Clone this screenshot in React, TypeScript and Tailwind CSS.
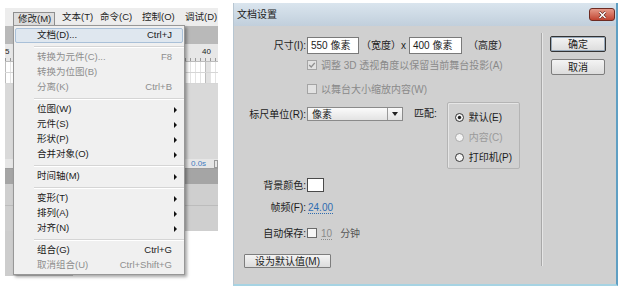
import React from "react";

type Item =
  | { label: string; sc?: string; sub?: boolean; dis?: boolean; hl?: boolean }
  | "sep";

const MENU: Item[] = [
  { label: "文档(D)...", sc: "Ctrl+J", hl: true },
  "sep",
  { label: "转换为元件(C)...", sc: "F8", dis: true },
  { label: "转换为位图(B)", dis: true },
  { label: "分离(K)", sc: "Ctrl+B", dis: true },
  "sep",
  { label: "位图(W)", sub: true },
  { label: "元件(S)", sub: true },
  { label: "形状(P)", sub: true },
  { label: "合并对象(O)", sub: true },
  "sep",
  { label: "时间轴(M)", sub: true },
  "sep",
  { label: "变形(T)", sub: true },
  { label: "排列(A)", sub: true },
  { label: "对齐(N)", sub: true },
  "sep",
  { label: "组合(G)", sc: "Ctrl+G" },
  { label: "取消组合(U)", sc: "Ctrl+Shift+G", dis: true },
];

function Check({ on, dis }: { on?: boolean; dis?: boolean }) {
  return (
    <svg width="10" height="10" viewBox="0 0 10 10" className="shrink-0">
      <rect x="0.5" y="0.5" width="9" height="9" fill={dis ? "#e2e2e2" : "#f6f6f6"} stroke={dis ? "#a4a4a4" : "#6a6a6a"} />
      {on && <path d="M2.2 5 L4.2 7 L7.8 2.8" fill="none" stroke={dis ? "#8f8f8f" : "#222"} strokeWidth="1.3" />}
    </svg>
  );
}

function Radio({ on, dis }: { on?: boolean; dis?: boolean }) {
  return (
    <svg width="9" height="9" viewBox="0 0 9 9" className="shrink-0">
      <circle cx="4.5" cy="4.5" r="4" fill="#f3f3f3" stroke={dis ? "#a9a9a9" : "#333"} />
      {on && <circle cx="4.5" cy="4.5" r="1.7" fill="#222" />}
    </svg>
  );
}

function Menu() {
  return (
    <div className="absolute left-[8px] top-[17px] w-[172px] pt-[2px] pb-[1px] bg-[#f0f0f0] border border-[#979797] shadow-[2px_2px_3px_rgba(0,0,0,0.35)]">
      {MENU.map((it, i) =>
        it === "sep" ? (
          <div key={i} className="h-[7px] flex items-center ml-[20px]">
            <div className="w-full h-[2px] border-t border-[#d5d5d5] border-b border-b-white" />
          </div>
        ) : (
          <div
            key={i}
            className={`relative flex items-center h-[15px] ${
              it.hl
                ? "mx-[1px] pl-[21px] pr-[10px] rounded-[2px] border border-[#a9c0d8] bg-[#dfe7ef]"
                : "pl-[23px] pr-[12px]"
            } ${it.dis ? "text-[#8e8e8e]" : "text-[#1b1b1b]"}`}
          >
            <span className="flex-1">{it.label}</span>
            {it.sc && <span>{it.sc}</span>}
            {it.sub && (
              <span className="absolute right-[7px] top-[5px] w-0 h-0 border-y-[3px] border-y-transparent border-l-[3px] border-l-[#111]" />
            )}
          </div>
        )
      )}
    </div>
  );
}

function FlashPanel() {
  return (
    <div className="relative ml-[5px] mt-[8px] w-[213px] h-[269px] shrink-0 text-[9.5px]">
      <div className="flex items-center h-[18px] bg-[#ededed] text-[#1e1e1e]">
        <div className="self-end ml-[8px] w-[42px] h-[14px] flex items-center pl-[4px] bg-[#dedede] border border-b-0 border-[#8e8e8e]">
          修改(M)
        </div>
        <span className="ml-[7px] w-[38px]">文本(T)</span>
        <span className="w-[42px]">命令(C)</span>
        <span className="w-[43px]">控制(O)</span>
        <span>调试(D)</span>
      </div>
      <div className="h-[18px] bg-[#b9b9b9]" />
      <div className="relative h-[18px] bg-[#e7e7e7] border-b border-[#bcbcbc] text-[8px] text-[#222]">
        <span className="absolute left-0 top-[2px]">5</span>
        <span className="absolute left-[197px] top-[2px]">40</span>
        <div className="absolute bottom-0 left-0 right-0 flex h-[3px]">
          {Array.from({ length: 43 }).map((_, i) => (
            <div key={i} className="w-[5px] shrink-0 border-l border-[#9a9a9a]" />
          ))}
        </div>
      </div>
      {[0, 1].map((r) => (
        <div key={r} className="flex h-[11px] bg-white border-b border-[#d6d6d6] overflow-hidden">
          {Array.from({ length: 43 }).map((_, i) => (
            <div
              key={i}
              className={`w-[5px] shrink-0 border-l ${i % 5 === 0 ? "border-[#bdbdbd]" : "border-[#e4e4e4]"} ${i === 40 ? "bg-[#e2e2e2]" : ""}`}
            />
          ))}
        </div>
      ))}
      <div className="h-[75px] bg-[#d9d9d9]" />
      <div className="flex items-center h-[10px] bg-[#e6e6e6] border-b border-[#9d9d9d] text-[8px] text-[#3f7bbf]">
        <span className="ml-[186px]">0.0s</span>
        <span className="ml-auto h-[8px] w-[4px] border border-[#9a9a9a]" />
      </div>
      <div className="h-[15px] bg-[#a5a5a5]" />
      <div className="h-[47px] bg-[#cfcfcf] flex flex-col">
        <div className="h-[22px] border-b border-[#bcbcbc]" />
      </div>
      <div className="h-[45px] w-[68px] bg-[#cdcdcd]" />
      <Menu />
    </div>
  );
}

function Btn({ children, def, w }: { children: React.ReactNode; def?: boolean; w: string }) {
  return (
    <div
      className={`${w} h-[16px] flex items-center justify-center rounded-[2px] bg-linear-to-b from-[#f4f4f4] to-[#dcdcdc] text-[10px] text-[#1a1a1a] ${
        def ? "border border-[#333] shadow-[inset_0_0_0_1px_#9ab]" : "border border-[#7d7d7d]"
      }`}
    >
      {children}
    </div>
  );
}

function DocDialog() {
  return (
    <div className="ml-[15px] mt-[3px] w-[385px] h-[283px] shrink-0 flex flex-col border-l border-l-[#b7c6d2] border-r-2 border-r-[#5f9fc3] border-b-2 border-b-[#a6d3e3] text-[10px] text-[#1c1c1c]">
      <div className="relative h-[23px] shrink-0 flex items-center pl-[3px] bg-linear-to-b from-[#dae5ee] to-[#c1cfdc]">
        文档设置
        <div className="absolute right-[1px] top-[5px] w-[26px] h-[13px] rounded-[3px] border border-[#6d2b22] bg-linear-to-b from-[#e59a8a] to-[#c0412f] flex items-center justify-center">
          <svg width="9" height="8" viewBox="0 0 9 8">
            <path d="M1.5 1 L7.5 7 M7.5 1 L1.5 7" stroke="#5a1d16" strokeWidth="2.6" />
            <path d="M1.5 1 L7.5 7 M7.5 1 L1.5 7" stroke="#fff" strokeWidth="1.5" />
          </svg>
        </div>
      </div>
      <div className="flex flex-1 bg-[#d0d0d0]">
        <div className="w-[307px] flex flex-col">
          <div className="flex items-center h-[17px] mt-[11px]">
            <span className="w-[72px] text-right">尺寸(I):</span>
            <div className="ml-[1px] w-[52px] h-[17px] flex items-center pl-[3px] bg-white border border-[#7a7a7a]">550 像素</div>
            <span className="ml-[2px]">（宽度）x</span>
            <div className="ml-[3px] w-[53px] h-[17px] flex items-center pl-[3px] bg-white border border-[#7a7a7a]">400 像素</div>
            <span className="ml-[6px]">（高度）</span>
          </div>
          <div className="flex items-center h-[14px] mt-[4px] ml-[73px] text-[#8a8a8a]">
            <Check on dis />
            <span className="ml-[4px]">调整 3D 透视角度以保留当前舞台投影(A)</span>
          </div>
          <div className="flex items-center h-[14px] mt-[10px] ml-[73px] text-[#8a8a8a]">
            <Check dis />
            <span className="ml-[4px]">以舞台大小缩放内容(W)</span>
          </div>
          <div className="flex items-start mt-[6px]">
            <div className="flex items-center h-[14px] mt-[5px]">
              <span className="w-[72px] text-right">标尺单位(R):</span>
              <div className="ml-[1px] w-[96px] h-[14px] flex items-center bg-linear-to-b from-[#fbfbfb] to-[#e3e3e3] border border-[#8a8a8a]">
                <span className="flex-1 pl-[4px]">像素</span>
                <div className="w-[15px] h-full border-l border-[#9a9a9a] flex items-center justify-center">
                  <svg width="6" height="4" viewBox="0 0 6 4">
                    <path d="M0 0 L6 0 L3 4 Z" fill="#222" />
                  </svg>
                </div>
              </div>
            </div>
            <span className="ml-[11px] mt-[4px]">匹配:</span>
            <div className="ml-[10px] w-[73px] h-[67px] flex flex-col gap-[6px] pt-[7px] pl-[7px] border border-[#b4b4b4] rounded-[2px] shadow-[inset_1px_1px_0_#e6e6e6]">
              <div className="flex items-center h-[14px] gap-[5px]">
                <Radio on />
                <span>默认(E)</span>
              </div>
              <div className="flex items-center h-[14px] gap-[5px] text-[#9a9a9a]">
                <Radio dis />
                <span>内容(C)</span>
              </div>
              <div className="flex items-center h-[14px] gap-[5px]">
                <Radio />
                <span>打印机(P)</span>
              </div>
            </div>
          </div>
          <div className="flex items-center h-[14px] mt-[9px]">
            <span className="w-[72px] text-right">背景颜色:</span>
            <div className="ml-[1px] w-[17px] h-[14px] bg-white border border-[#4a4a4a]" />
          </div>
          <div className="flex items-center h-[14px] mt-[8px]">
            <span className="w-[72px] text-right">帧频(F):</span>
            <span className="ml-[2px] text-[#2f6db0] underline decoration-dotted underline-offset-2">24.00</span>
          </div>
          <div className="flex items-center h-[14px] mt-[12px]">
            <span className="w-[72px] text-right">自动保存:</span>
            <span className="ml-[1px]">
              <Check />
            </span>
            <span className="ml-[4px] text-[#8a8a8a] underline decoration-dotted underline-offset-2">10</span>
            <span className="ml-[8px] text-[#555]">分钟</span>
          </div>
          <div className="ml-[10px] mt-[14px] w-[87px] h-[14px] flex items-center justify-center rounded-[1px] bg-linear-to-b from-[#f4f4f4] to-[#dcdcdc] border border-[#7d7d7d]">
            设为默认值(M)
          </div>
        </div>
        <div className="w-[2px] mt-[7px] mb-[18px] border-l border-[#a8a8a8] bg-[#e6e6e6]" />
        <div className="flex-1 flex flex-col pl-[7px]">
          <div className="mt-[10px]">
            <Btn def w="w-[56px]">确定</Btn>
          </div>
          <div className="mt-[7px] ml-[1px]">
            <Btn w="w-[54px]">取消</Btn>
          </div>
        </div>
      </div>
    </div>
  );
}

export default function App() {
  return (
    <div className="w-[627px] h-[293px] bg-white flex items-start overflow-hidden font-['Liberation_Sans','Noto_Sans_CJK_SC',sans-serif]">
      <FlashPanel />
      <DocDialog />
    </div>
  );
}
